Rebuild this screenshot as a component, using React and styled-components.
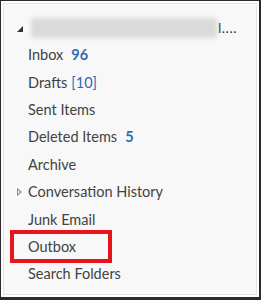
import React from 'react';
import styled, {createGlobalStyle} from 'styled-components';

const Global = createGlobalStyle`
  html, body { margin: 0; padding: 0; background: #fff; }
  body { font-family: Lato, "Open Sans", sans-serif; }
`;

const folders = [
  {name: 'Inbox', count: '96', bold: true},
  {name: 'Drafts', count: '[10]'},
  {name: 'Sent Items'},
  {name: 'Deleted Items', count: '5', bold: true},
  {name: 'Archive'},
  {name: 'Conversation History', collapsed: true},
  {name: 'Junk Email'},
  {name: 'Outbox', marked: true},
  {name: 'Search Folders'},
];

const App = () => (
  <>
    <Global />
    <Frame>
      <Pane>
        <AccountRow>
          <Expanded />
          <Blurred />
          <Tail>l....</Tail>
        </AccountRow>
        {folders.map(f => (
          <Row key={f.name}>
            {f.collapsed && <Collapsed />}
            <Label $marked={f.marked}>
              {f.name}
              {f.count && <Count $bold={f.bold}>{f.count}</Count>}
            </Label>
          </Row>
        ))}
      </Pane>
    </Frame>
  </>
);

const Frame = styled.div`
  width: 261px;
  height: 300px;
  box-sizing: border-box;
  border: 1px solid #2a2a2a;
  border-right-width: 2px;
  border-bottom-width: 3px;
  background: #fff;
  padding: 2px;
`;

const Pane = styled.div`
  height: 100%;
  box-sizing: border-box;
  border: 1px solid #e4e4e4;
  background: #f8f8f8;
  display: flex;
  flex-direction: column;
  padding-top: 10px;
`;

const AccountRow = styled.div`
  height: 27px;
  display: flex;
  align-items: center;
  padding-left: 13px;
`;

const Expanded = styled.span`
  width: 0;
  height: 0;
  border-left: 6px solid transparent;
  border-bottom: 6px solid #333;
  margin-right: 8px;
  margin-top: 3px;
`;

const Blurred = styled.div`
  width: 186px;
  height: 20px;
  background: #dadada;
  filter: blur(2px);
`;

const Tail = styled.span`
  font-size: 14px;
  color: #333;
  margin-left: 1px;
  letter-spacing: 0.5px;
`;

const Row = styled.div`
  height: 27.4px;
  display: flex;
  align-items: center;
  padding-left: 24px;
  position: relative;
`;

const Collapsed = styled.span`
  position: absolute;
  left: 13px;
  top: 10px;
  width: 0;
  height: 0;
  border-top: 4px solid transparent;
  border-bottom: 4px solid transparent;
  border-left: 5px solid #888;
  &::after {
    content: '';
    position: absolute;
    left: -4px;
    top: -2px;
    border-top: 2px solid transparent;
    border-bottom: 2px solid transparent;
    border-left: 2px solid #f8f8f8;
  }
`;

const Label = styled.span`
  font-size: 14.5px;
  color: #424242;
  padding: 4px 3px;
  margin-left: -3px;
  ${p => p.$marked && `
    outline: 4px solid #e8141c;
    outline-offset: -4px;
    padding: 8px 36px 7px 18px;
    margin-left: -18px;
    line-height: 18px;
  `}
`;

const Count = styled.span`
  color: #2b6cb5;
  font-weight: ${p => (p.$bold ? 700 : 400)};
  margin-left: ${p => (p.$bold ? 8 : 4)}px;
`;

export default App;
